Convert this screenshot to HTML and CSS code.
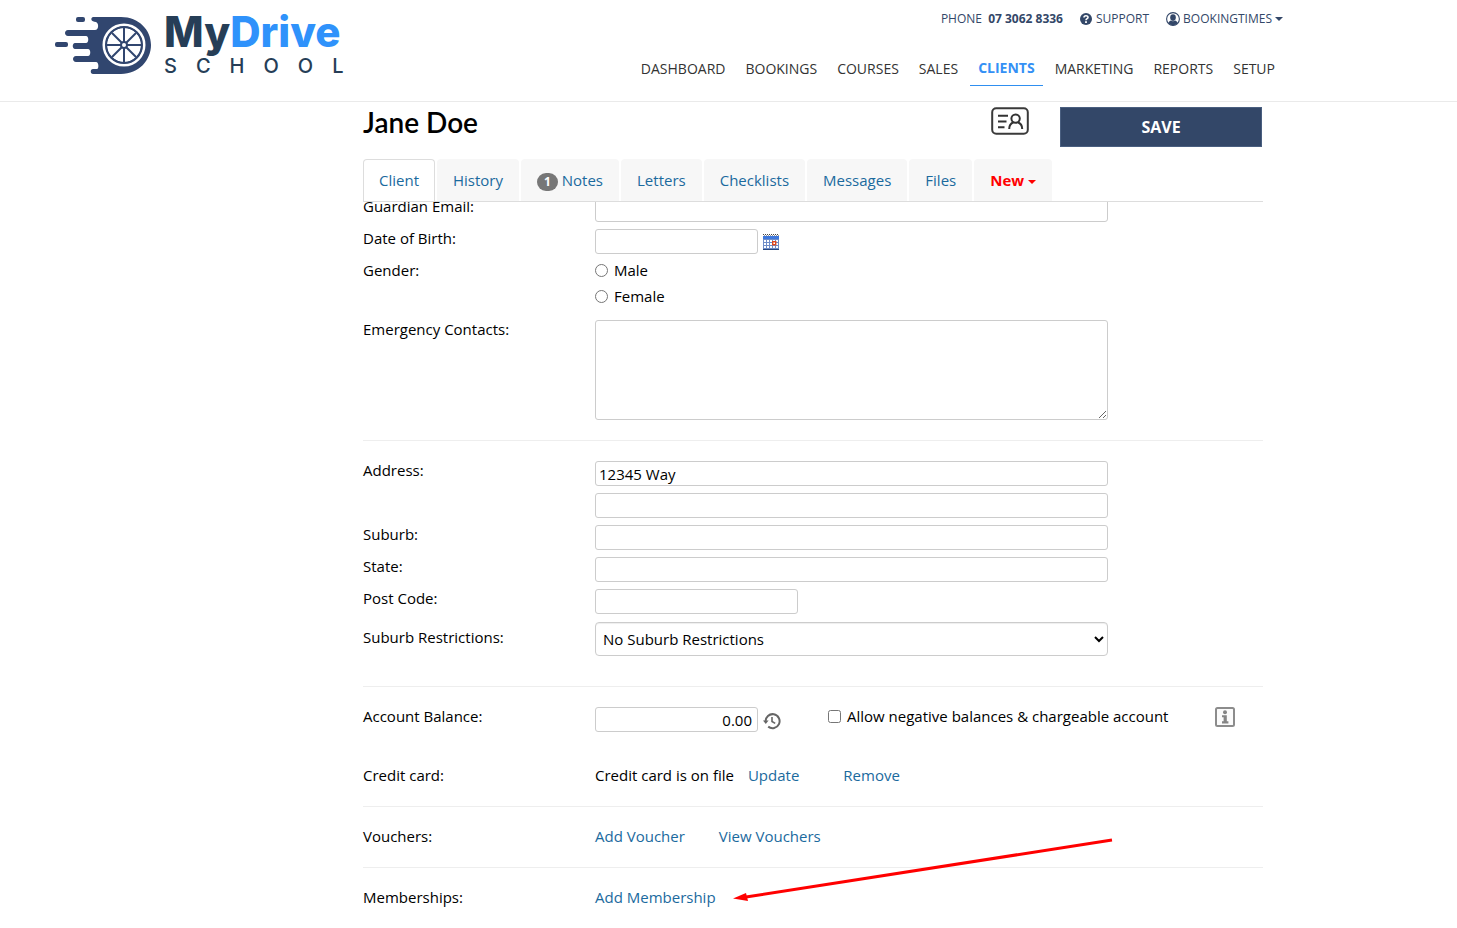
FILE: index.html
```html
<!DOCTYPE html>
<html lang="en">
<head>
<meta charset="utf-8">
<title>Jane Doe - MyDrive School</title>
<link rel="stylesheet" href="styles.css">
</head>
<body>
<header class="site-header">
  <a class="logo" href="#">
    <svg class="logo-mark" width="97" height="60" viewBox="0 0 97 60" aria-hidden="true">
      <g fill="#31466f">
        <path d="M38 1H66C84 1 96 14 96 29S84 58 66 58H38C35 58 35 53 38 53H42C44 53 44 46 41 46H21C17 46 17 40 21 40H33C36 40 36 33 33 33H20C17 33 17 27 20 27H31C34 27 34 20 31 20H13C9 20 9 14 13 14H40C44 14 44 7 41 6C36 6 35 2 38 1Z"/>
        <rect x="21" y="1" width="9" height="5" rx="2"/>
        <rect x="0" y="26" width="13" height="5" rx="2"/>
      </g>
      <circle cx="69" cy="29" r="20" fill="none" stroke="#fff" stroke-width="3"/>
      <circle cx="69" cy="29" r="17" fill="#fff"/>
      <g stroke="#31466f" stroke-width="2" fill="none">
        <circle cx="69" cy="29" r="18"/>
        <path d="M69 12V46M52 29H86M57 17L81 41M81 17L57 41"/>
      </g>
      <circle cx="69" cy="29" r="4" fill="#31466f"/>
      <circle cx="69" cy="29" r="2" fill="#fff"/>
    </svg>
    <span class="logo-text">
      <span class="logo-name">My<span class="logo-accent">Drive</span></span>
      <span class="logo-sub">SCHOOL</span>
    </span>
  </a>
  <div class="header-right">
    <div class="top-links">
      <span class="phone">PHONE <b>07 3062 8336</b></span>
      <a href="#">
        <svg width="12" height="12" viewBox="0 0 12 12" aria-hidden="true"><circle cx="6" cy="6" r="6" fill="#334768"/><path d="M4 4.6C4 2.2 8 2.3 8 4.4C8 5.7 6 5.6 6 7.2" fill="none" stroke="#fff" stroke-width="1.6"/><rect x="5.1" y="8.2" width="1.8" height="1.8" fill="#fff"/></svg>
        SUPPORT</a>
      <a class="account" href="#">
        <svg width="14" height="14" viewBox="0 0 14 14" aria-hidden="true"><circle cx="7" cy="7" r="6.4" fill="none" stroke="#334768" stroke-width="1.1"/><ellipse cx="7" cy="5.6" rx="2.8" ry="3.3" fill="#334768"/><path d="M2.2 11C3 9 4.2 8.700 5 8.400C6 9.400 8 9.400 9 8.400C10 8.700 11 9 11.800 11C9 14 5 14 2.200 11Z" fill="#334768"/></svg>
        BOOKINGTIMES<span class="caret"></span></a>
    </div>
    <nav class="main-nav">
      <a href="#">DASHBOARD</a>
      <a href="#">BOOKINGS</a>
      <a href="#">COURSES</a>
      <a href="#">SALES</a>
      <a class="active" href="#">CLIENTS</a>
      <a href="#">MARKETING</a>
      <a href="#">REPORTS</a>
      <a href="#">SETUP</a>
    </nav>
  </div>
</header>

<main class="page">
  <div class="client-head">
    <div class="title-bar">
      <h1>Jane Doe</h1>
      <button class="icon-button" type="button" aria-label="Client card">
        <svg width="38" height="28" viewBox="0 0 38 28" aria-hidden="true"><rect x="1.2" y="1.2" width="35.6" height="25.6" rx="4" fill="none" stroke="#3a3a3a" stroke-width="2"/><g fill="none" stroke="#333" stroke-width="2"><path d="M7 8.7H17M7 14.4H15.500M7 20.2H13.500"/><circle cx="24.6" cy="11.6" r="4.200"/><path d="M18.200 22C18.200 17.500 20.600 15.900 22.400 15.200M26.800 15.200C29 16 31.200 17.500 31.200 22"/></g></svg>
      </button>
      <button class="save" type="submit" form="client-form">SAVE</button>
    </div>
    <nav class="tabs">
      <a class="tab current" href="#">Client</a>
      <a class="tab" href="#">History</a>
      <a class="tab" href="#"><span class="badge">1</span> Notes</a>
      <a class="tab" href="#">Letters</a>
      <a class="tab" href="#">Checklists</a>
      <a class="tab" href="#">Messages</a>
      <a class="tab" href="#">Files</a>
      <a class="tab new" href="#">New <span class="caret"></span></a>
    </nav>
  </div>

  <form class="client-form" id="client-form">
    <section class="group">
      <div class="row"><label for="gemail">Guardian Email:</label><input class="text" id="gemail" type="text"></div>
      <div class="row"><label for="dob">Date of Birth:</label>
        <div class="inline">
          <input class="text short" id="dob" type="text">
          <svg class="calendar" width="16" height="16" viewBox="0 0 16 16" aria-hidden="true"><rect y="2" width="16" height="14" fill="#6f8dc8"/><rect y="2" width="16" height="3" fill="#3f78dc"/><path d="M0 .5H16" stroke="#444" stroke-dasharray="1 1"/><path d="M1 1.5H16" stroke="#999" stroke-dasharray="1 1"/><g fill="#fff"><path d="M1 6h2v2H1zM4 6h2v2H4zM7 6h2v2H7zM10 6h2v2h-2zM13 6h2v2h-2zM1 9h2v2H1zM4 9h2v2H4zM7 9h2v2H7zM13 9h2v2h-2zM1 12h2v2H1zM4 12h2v2H4zM7 12h2v2H7zM10 12h2v2h-2zM13 12h2v2h-2z"/></g><rect x="9.700" y="7.700" width="3" height="3" fill="#fff" stroke="#e0471c" stroke-width="1.4"/><path d="M0 15.500H16" stroke="#274780"/></svg>
        </div>
      </div>
      <div class="row" role="radiogroup" aria-labelledby="gender"><span id="gender">Gender:</span>
        <div class="radios">
          <label><input type="radio" name="gender">Male</label>
          <label><input type="radio" name="gender">Female</label>
        </div>
      </div>
      <div class="row"><label for="emergency">Emergency Contacts:</label><textarea class="text area" id="emergency"></textarea></div>
    </section>

    <section class="group roomy">
      <div class="row"><label for="addr1">Address:</label><input class="text" id="addr1" type="text" value="12345 Way"></div>
      <div class="row"><span></span><input class="text" type="text" aria-label="Address line 2"></div>
      <div class="row"><label for="suburb">Suburb:</label><input class="text" id="suburb" type="text"></div>
      <div class="row"><label for="state">State:</label><input class="text" id="state" type="text"></div>
      <div class="row"><label for="postcode">Post Code:</label><input class="text medium" id="postcode" type="text"></div>
      <div class="row"><label class="select-label" for="restrict">Suburb Restrictions:</label>
        <select class="select" id="restrict"><option>No Suburb Restrictions</option></select></div>
    </section>

    <section class="group">
      <div class="row balance-row"><label for="balance">Account Balance:</label>
        <div class="inline">
          <input class="text short amount" id="balance" type="text" value="0.00">
          <svg class="history" width="18" height="18" viewBox="0 0 18 18" aria-hidden="true"><path d="M2.6 9.6A7 7 0 1 1 5.2 14.6" fill="none" stroke="#666" stroke-width="2"/><path d="M0 8.4H5.6L2.8 12Z" fill="#666"/><path d="M9 5V9.500L12.200 11.400" fill="none" stroke="#666" stroke-width="1.6"/></svg>
          <label class="allow"><input type="checkbox">Allow negative balances &amp; chargeable account</label>
          <svg class="info" width="20" height="20" viewBox="0 0 20 20" aria-hidden="true"><rect x="1" y="1" width="18" height="18" rx="1.5" fill="#fbfbfb" stroke="#8c8c8c" stroke-width="2"/><circle cx="10" cy="5.2" r="2" fill="#858585"/><path d="M7 8.200h4.800v6H13.400V16.400H7v-2.200h1.600V10.200H7z" fill="#858585"/></svg>
        </div>
      </div>
      <div class="row"><span>Credit card:</span>
        <div class="links card-links"><span>Credit card is on file</span><a href="#">Update</a><a class="remove" href="#">Remove</a></div></div>
    </section>

    <section class="group">
      <div class="row"><span>Vouchers:</span><div class="links voucher-links"><a href="#">Add Voucher</a><a href="#">View Vouchers</a></div></div>
    </section>

    <section class="group">
      <div class="row"><span>Memberships:</span>
        <div class="links membership"><a href="#">Add Membership</a>
          <svg class="arrow" width="382" height="66" viewBox="0 0 382 66" aria-hidden="true"><path d="M380 3L14 60" stroke="#f00" stroke-width="3"/><path d="M1 61.500L14 56L16 64Z" fill="#f00"/></svg>
        </div>
      </div>
    </section>
  </form>
</main>
</body>
</html>
```

FILE: styles.css
```css
* { box-sizing: border-box; }
body {
  margin: 0;
  background: #fff;
  color: #000;
  font: 15px/20px "Open Sans", sans-serif;
}
a { color: #1b6a9e; text-decoration: none; }
input, textarea, select, button { font: inherit; color: inherit; }

.site-header {
  display: flex;
  justify-content: space-between;
  align-items: flex-start;
  min-height: 102px;
  padding: 0 174px 0 55px;
  border-bottom: 1px solid #eaeaea;
}
.logo { display: flex; gap: 12px; padding-top: 16px; }
.logo-text { display: flex; flex-direction: column; color: #263e57; }
.logo-name { font: 800 42px/32px Inter, sans-serif; }
.logo-accent { color: #2f92fb; }
.logo-sub { padding-top: 6px; font: 500 20px/24px Inter, sans-serif; letter-spacing: 19px; }

.header-right { display: flex; flex-direction: column; align-items: flex-end; }
.top-links { display: flex; gap: 17px; padding-top: 9px; font-size: 12px; }
.top-links, .top-links a { color: #334768; }
.top-links a { display: flex; align-items: center; gap: 4px; }
.top-links b { margin-left: 3px; }
.top-links .account { gap: 3px; }
.caret {
  display: inline-block;
  border: 4px solid transparent;
  border-top-color: currentColor;
  border-bottom: 0;
  vertical-align: middle;
}
.main-nav { display: flex; gap: 4px; padding-top: 28px; }
.main-nav a {
  padding: 2px 8px 6px;
  border-bottom: 1px solid transparent;
  color: #333;
  font-size: 14px;
}
.main-nav .active { padding: 1px 8px 7px; border-color: #2f8ff0; color: #3490f5; font-weight: 700; }

.page { padding: 0 194px 0 363px; }
.client-head { position: relative; z-index: 1; background: #fff; }
.title-bar { display: flex; align-items: flex-start; height: 57px; padding: 5px 1px 0 0; }
h1 { flex: 1; margin: 0; font: 600 28px/30px Lato, sans-serif; }
.icon-button { display: flex; margin-right: 31px; padding: 0; border: 0; background: none; }
.save {
  width: 202px;
  height: 40px;
  border: 1px solid #4a5f80;
  background: #334768;
  color: #fff;
  font-size: 16px;
  font-weight: 700;
}
.tabs { display: flex; gap: 2px; border-bottom: 1px solid #ddd; }
.tab {
  padding: 11px 16px;
  border-radius: 4px 4px 0 0;
  background: #f7f7f7;
}
.tabs .tab { padding-bottom: 11px; margin-bottom: 0; height: 42px; }
.tabs .tab.current {
  margin-bottom: -1px;
  padding: 10px 15px 11px;
  border: 1px solid #ddd;
  border-bottom: 0;
  background: #fff;
}
.tab.new { color: #f00; font-weight: 700; }
.badge {
  display: inline-block;
  padding: 3px 7px;
  border-radius: 10px;
  background: #777;
  color: #fff;
  font-size: 12px;
  font-weight: 700;
  line-height: 12px;
}

.client-form { margin-top: -5px; line-height: 18px; }
.group { display: flex; flex-direction: column; gap: 7px; padding-bottom: 20px; }
.group + .group { padding-top: 20px; border-top: 1px solid #eee; }
.group.roomy { padding-bottom: 30px; }
.row { display: grid; grid-template-columns: 232px 1fr; align-items: start; min-height: 20px; }
.text {
  width: 100%;
  max-width: 513px;
  height: 25px;
  padding: 0 3px;
  border: 1px solid #ccc;
  border-radius: 3px;
  background: #fff;
}
.short { width: 163px; }
.medium { width: 203px; }
.area { height: 100px; resize: vertical; }
.amount { padding-right: 5px; text-align: right; }
.inline { display: flex; align-items: flex-start; }
.calendar { margin: 5px 0 0 5px; }
.radios { display: flex; flex-direction: column; gap: 8px; padding-bottom: 8px; }
.radios label, .allow { display: flex; }
.radios input { margin: 2px 6px 0 0; }
.select-label { padding-top: 7px; }
.select {
  width: 100%;
  max-width: 513px;
  height: 34px;
  margin-top: 1px;
  padding: 0 3px;
  border: 1px solid #ccc;
  border-radius: 4px;
  background: #fff;
  box-shadow: inset 0 1px 1px #eee;
}
.balance-row { padding-bottom: 27px; }
.history { margin: 5px 0 0 5px; }
.allow { margin-left: 47px; }
.radios input, .allow input { margin: 1px 6px 0 0; }
.info { margin-left: 47px; }
.links { display: flex; gap: 14px; }
.remove { margin-left: 30px; }
.voucher-links { gap: 34px; }
.membership { position: relative; }
.arrow { position: absolute; top: -51px; left: 137px; }
```
